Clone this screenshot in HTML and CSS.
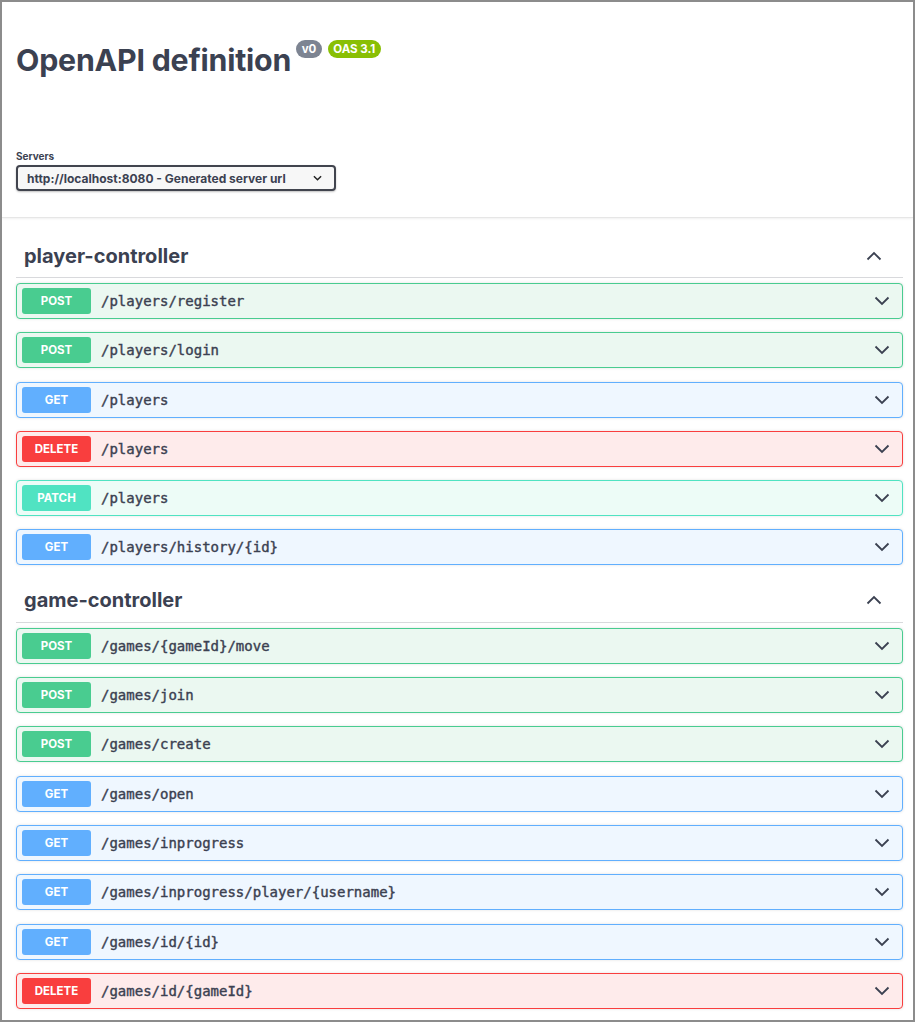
FILE: index.html
```html
<!DOCTYPE html>
<html lang="en">
<head>
<meta charset="utf-8">
<title>OpenAPI definition</title>
<link rel="stylesheet" href="styles.css">
</head>
<body>
<div class="frame">
  <header class="info">
    <div class="title-row">
      <h1 class="title">OpenAPI definition</h1>
      <span class="badge badge-version">v0</span>
      <span class="badge badge-oas">OAS 3.1</span>
    </div>
    <div class="servers">
      <span class="servers-label">Servers</span>
      <div class="select">
        <span>http://localhost:8080 - Generated server url</span>
        <svg class="select-chev" viewBox="0 0 10 6" width="9" height="6"><path d="M1 1l4 4 4-4" fill="none" stroke="#222" stroke-width="1.6"/></svg>
      </div>
    </div>
  </header>

  <main class="wrapper">
    <section class="tag">
      <div class="tag-head">
        <h2>player-controller</h2>
        <svg class="chev-up" viewBox="0 0 16 10" width="16" height="10"><path d="M1.5 8.5L8 2l6.5 6.5" fill="none" stroke="#3b4151" stroke-width="1.8"/></svg>
      </div>
      <div class="op post"><span class="method">POST</span><span class="path">/players/register</span><svg class="chev" viewBox="0 0 16 10" width="16" height="10"><path d="M1.5 1.5L8 8l6.5-6.5" fill="none" stroke="#3b4151" stroke-width="1.8"/></svg></div>
      <div class="op post"><span class="method">POST</span><span class="path">/players/login</span><svg class="chev" viewBox="0 0 16 10" width="16" height="10"><path d="M1.5 1.5L8 8l6.5-6.5" fill="none" stroke="#3b4151" stroke-width="1.8"/></svg></div>
      <div class="op get"><span class="method">GET</span><span class="path">/players</span><svg class="chev" viewBox="0 0 16 10" width="16" height="10"><path d="M1.5 1.5L8 8l6.5-6.5" fill="none" stroke="#3b4151" stroke-width="1.8"/></svg></div>
      <div class="op delete"><span class="method">DELETE</span><span class="path">/players</span><svg class="chev" viewBox="0 0 16 10" width="16" height="10"><path d="M1.5 1.5L8 8l6.5-6.5" fill="none" stroke="#3b4151" stroke-width="1.8"/></svg></div>
      <div class="op patch"><span class="method">PATCH</span><span class="path">/players</span><svg class="chev" viewBox="0 0 16 10" width="16" height="10"><path d="M1.5 1.5L8 8l6.5-6.5" fill="none" stroke="#3b4151" stroke-width="1.8"/></svg></div>
      <div class="op get"><span class="method">GET</span><span class="path">/players/history/{id}</span><svg class="chev" viewBox="0 0 16 10" width="16" height="10"><path d="M1.5 1.5L8 8l6.5-6.5" fill="none" stroke="#3b4151" stroke-width="1.8"/></svg></div>
    </section>

    <section class="tag">
      <div class="tag-head">
        <h2>game-controller</h2>
        <svg class="chev-up" viewBox="0 0 16 10" width="16" height="10"><path d="M1.5 8.5L8 2l6.5 6.5" fill="none" stroke="#3b4151" stroke-width="1.8"/></svg>
      </div>
      <div class="op post"><span class="method">POST</span><span class="path">/games/{gameId}/move</span><svg class="chev" viewBox="0 0 16 10" width="16" height="10"><path d="M1.5 1.5L8 8l6.5-6.5" fill="none" stroke="#3b4151" stroke-width="1.8"/></svg></div>
      <div class="op post"><span class="method">POST</span><span class="path">/games/join</span><svg class="chev" viewBox="0 0 16 10" width="16" height="10"><path d="M1.5 1.5L8 8l6.5-6.5" fill="none" stroke="#3b4151" stroke-width="1.8"/></svg></div>
      <div class="op post"><span class="method">POST</span><span class="path">/games/create</span><svg class="chev" viewBox="0 0 16 10" width="16" height="10"><path d="M1.5 1.5L8 8l6.5-6.5" fill="none" stroke="#3b4151" stroke-width="1.8"/></svg></div>
      <div class="op get"><span class="method">GET</span><span class="path">/games/open</span><svg class="chev" viewBox="0 0 16 10" width="16" height="10"><path d="M1.5 1.5L8 8l6.5-6.5" fill="none" stroke="#3b4151" stroke-width="1.8"/></svg></div>
      <div class="op get"><span class="method">GET</span><span class="path">/games/inprogress</span><svg class="chev" viewBox="0 0 16 10" width="16" height="10"><path d="M1.5 1.5L8 8l6.5-6.5" fill="none" stroke="#3b4151" stroke-width="1.8"/></svg></div>
      <div class="op get"><span class="method">GET</span><span class="path">/games/inprogress/player/{username}</span><svg class="chev" viewBox="0 0 16 10" width="16" height="10"><path d="M1.5 1.5L8 8l6.5-6.5" fill="none" stroke="#3b4151" stroke-width="1.8"/></svg></div>
      <div class="op get"><span class="method">GET</span><span class="path">/games/id/{id}</span><svg class="chev" viewBox="0 0 16 10" width="16" height="10"><path d="M1.5 1.5L8 8l6.5-6.5" fill="none" stroke="#3b4151" stroke-width="1.8"/></svg></div>
      <div class="op delete"><span class="method">DELETE</span><span class="path">/games/id/{gameId}</span><svg class="chev" viewBox="0 0 16 10" width="16" height="10"><path d="M1.5 1.5L8 8l6.5-6.5" fill="none" stroke="#3b4151" stroke-width="1.8"/></svg></div>
    </section>
  </main>
</div>
</body>
</html>
```

FILE: styles.css
```css
* { box-sizing: border-box; }

html, body {
  margin: 0;
  padding: 0;
  background: #fff;
}

body {
  font-family: Inter, "Noto Sans", sans-serif;
  color: #3b4151;
}

.frame {
  width: 915px;
  height: 1022px;
  border: 2px solid #8c8c8c;
  overflow: hidden;
  background: #fff;
}

/* ---------- info block ---------- */
.info {
  border-bottom: 1px solid #e6e6e6;
  box-shadow: 0 1px 2px rgba(0, 0, 0, 0.06);
  padding: 0 10px 26px 14px;
}

.title-row {
  display: flex;
  align-items: flex-start;
  padding-top: 38px;
}

.title {
  margin: 0;
  font-size: 30.3px;
  font-weight: 700;
  line-height: 40px;
  letter-spacing: -0.2px;
  color: #3b4151;
}

.badge {
  display: inline-block;
  height: 18px;
  line-height: 18px;
  padding: 0 5.5px;
  border-radius: 9px;
  font-size: 11.5px;
  font-weight: 700;
  color: #fff;
  margin-top: 0;
}

.badge-version {
  background: #7d8492;
  margin-left: 5px;
}

.badge-oas {
  background: #89bf04;
  margin-left: 6px;
}

.servers {
  margin-top: 70px;
  display: flex;
  flex-direction: column;
  align-items: flex-start;
}

.servers-label {
  font-size: 10px;
  font-weight: 700;
  line-height: 12px;
  color: #3b4151;
}

.select {
  margin-top: 3px;
  width: 320px;
  height: 26px;
  border: 2px solid #41444e;
  border-radius: 4px;
  box-shadow: 0 1px 2px rgba(0, 0, 0, 0.25);
  display: flex;
  align-items: center;
  justify-content: space-between;
  padding: 0 12px 0 9px;
  font-size: 12px;
  font-weight: 700;
  color: #3b4151;
  background: #f7f7f7;
}

/* ---------- operation lists ---------- */
.wrapper {
  padding: 0 10px 0 14px;
}

.tag {
  display: flex;
  flex-direction: column;
}

.tag-head {
  display: flex;
  align-items: center;
  justify-content: space-between;
  height: 44px;
  margin-top: 16px;
  padding: 0 21px 0 8px;
  border-bottom: 1px solid rgba(59, 65, 81, 0.2);
  margin-bottom: 5px;
}

.tag + .tag .tag-head {
  margin-top: 0;
}

.tag-head h2 {
  margin: 0;
  font-size: 20px;
  font-weight: 700;
  color: #3b4151;
}

.op {
  display: flex;
  align-items: center;
  height: 36px;
  margin-bottom: 13.3px;
  border: 1px solid;
  border-radius: 4px;
  padding: 0 12px 0 5px;
  box-shadow: 0 0 3px rgba(0, 0, 0, 0.12);
}

.method {
  width: 69px;
  height: 26px;
  line-height: 26px;
  border-radius: 3px;
  text-align: center;
  color: #fff;
  font-size: 11.5px;
  font-weight: 700;
  flex-shrink: 0;
}

.path {
  margin-left: 10px;
  flex: 1;
  font-family: "DejaVu Sans Mono", "Liberation Mono", monospace;
  font-size: 14px;
  font-weight: 400;
  -webkit-text-stroke: 0.4px currentColor;
  color: #3b4151;
}

.chev { flex-shrink: 0; }

.post { background: #ebf8f1; border-color: #49cc90; }
.post .method { background: #49cc90; }

.get { background: #eff7ff; border-color: #61affe; }
.get .method { background: #61affe; }

.delete { background: #feebeb; border-color: #f93e3e; }
.delete .method { background: #f93e3e; }

.patch { background: #edfcf7; border-color: #50e3c2; }
.patch .method { background: #50e3c2; }
```
